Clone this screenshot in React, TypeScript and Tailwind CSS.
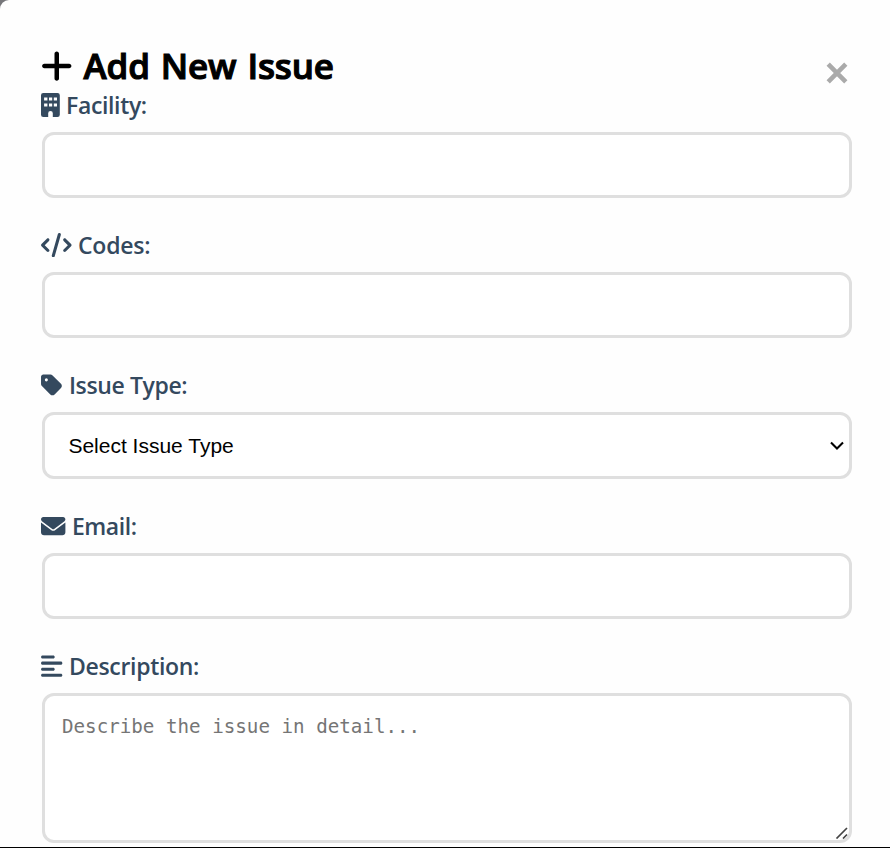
import type { ReactNode } from "react";
import { FaAlignLeft, FaCode, FaEnvelope, FaPlus, FaTag } from "react-icons/fa6";

const control =
  "block w-full rounded-[12px] border-3 border-[#dfdfdf] bg-white outline-none";

function BuildingIcon() {
  return (
    <svg className="h-6 w-[19px]" viewBox="0 0 19 24" fill="currentColor">
      <path
        fillRule="evenodd"
        d="M2.3 0h14.2a2.3 2.3 0 0 1 2.3 2.3v19.4a2.3 2.3 0 0 1-2.3 2.3H11.8v-3.8a2.3 2.3 0 0 0-4.6 0V24H2.3A2.3 2.3 0 0 1 0 21.7V2.3A2.3 2.3 0 0 1 2.3 0ZM3.1 4.5v3h3.3v-3ZM8 4.5v3h3.2v-3ZM12.8 4.5v3h3.2v-3ZM3.1 10.5v3h3.3v-3ZM8 10.5v3h3.2v-3ZM12.8 10.5v3h3.2v-3Z"
      />
    </svg>
  );
}

function Field({
  icon,
  label,
  spacing,
  className,
  children,
}: {
  icon: ReactNode;
  label: string;
  spacing: string;
  className: string;
  children: ReactNode;
}) {
  return (
    <div className={className}>
      <label className="-ml-[0.8px] flex h-[26px] items-center text-[#34495e]">
        {icon}
        <span className={"font-semibold whitespace-nowrap text-[23px] leading-[26px] " + spacing}>{label}</span>
      </label>
      <div className="mt-[14px]">{children}</div>
    </div>
  );
}

export default function App() {
  return (
    <div className="h-[848px] w-[890px] overflow-hidden bg-[#77777a] font-['Open_Sans','Noto_Sans',sans-serif]">
      <div className="h-[848px] rounded-tl-[9px] border-b border-black bg-[#fefefe] pr-[38px] pl-[42px]">
        <header className="flex h-[92px] items-start justify-between">
          <h2 className="-ml-[0.7px] flex items-start pt-[47.5px] text-black">
            <FaPlus className="h-[36px] w-[31.5px]" />
            <span className="ml-[10.8px] text-[35px] leading-[36px] font-semibold tracking-[-0.15px] whitespace-nowrap [-webkit-text-stroke:1.1px_#000] [word-spacing:2px]">
              Add New Issue
            </span>
          </h2>
          <button type="button" aria-label="Close" className="mt-[62px] mr-[4.5px]">
            <svg width="22" height="22" viewBox="0 0 22 22" stroke="#aaaaaa" strokeWidth="4.6">
              <path d="M2.2 2.2 19.8 19.8M19.8 2.2 2.2 19.8" />
            </svg>
          </button>
        </header>

        <Field
          className="h-[140px]"
          label="Facility:"
          spacing="ml-[5.8px] tracking-[-0.35px]"
          icon={<BuildingIcon />}
        >
          <input className={control + " h-[66px]"} />
        </Field>
        <Field
          className="h-[140px]"
          label="Codes:"
          spacing="ml-[6.2px] tracking-[-0.2px]"
          icon={<FaCode className="h-[24.4px] w-[30.6px]" />}
        >
          <input className={control + " h-[66px]"} />
        </Field>
        <Field
          className="h-[141px]"
          label="Issue Type:"
          spacing="ml-[6.4px] tracking-[-0.38px]"
          icon={<FaTag className="h-[24.4px] w-[21.4px]" />}
        >
          <div
            className={
              control +
              " flex! h-[67px] items-center justify-between pr-[5px] pl-[23.4px] font-['Liberation_Sans',Arial,sans-serif] text-[21px] text-black"
            }
          >
            <span>Select Issue Type</span>
            <svg width="14" height="9" viewBox="0 0 14 9" fill="none" stroke="#000" strokeWidth="2.1" className="-mt-px">
              <path d="M1 1.4 7 7.4 13 1.4" />
            </svg>
          </div>
        </Field>
        <Field
          className="h-[140px]"
          label="Email:"
          spacing="ml-[6.3px] tracking-[-0.4px]"
          icon={<FaEnvelope className="h-[24.4px] w-[24.4px]" />}
        >
          <input className={control + " h-[66px]"} />
        </Field>
        <Field
          className="h-[190px]"
          label="Description:"
          spacing="ml-[6.4px] tracking-[-0.32px]"
          icon={<FaAlignLeft className="h-[24.4px] w-[21.4px]" />}
        >
          <div className={control + " flex! h-[150px] justify-between"}>
            <span className="pt-[18px] pl-[17px] font-['DejaVu_Sans_Mono',monospace] text-[19.2px] leading-[26px] text-[#757575]">
              Describe the issue in detail...
            </span>
            <svg className="mr-[1px] mb-[1px] self-end" width="13" height="13" viewBox="0 0 13 13" stroke="#444" strokeWidth="1.7">
              <path d="M1.5 12.5 12 2M8 12.5 12 8.5" />
            </svg>
          </div>
        </Field>
      </div>
    </div>
  );
}
